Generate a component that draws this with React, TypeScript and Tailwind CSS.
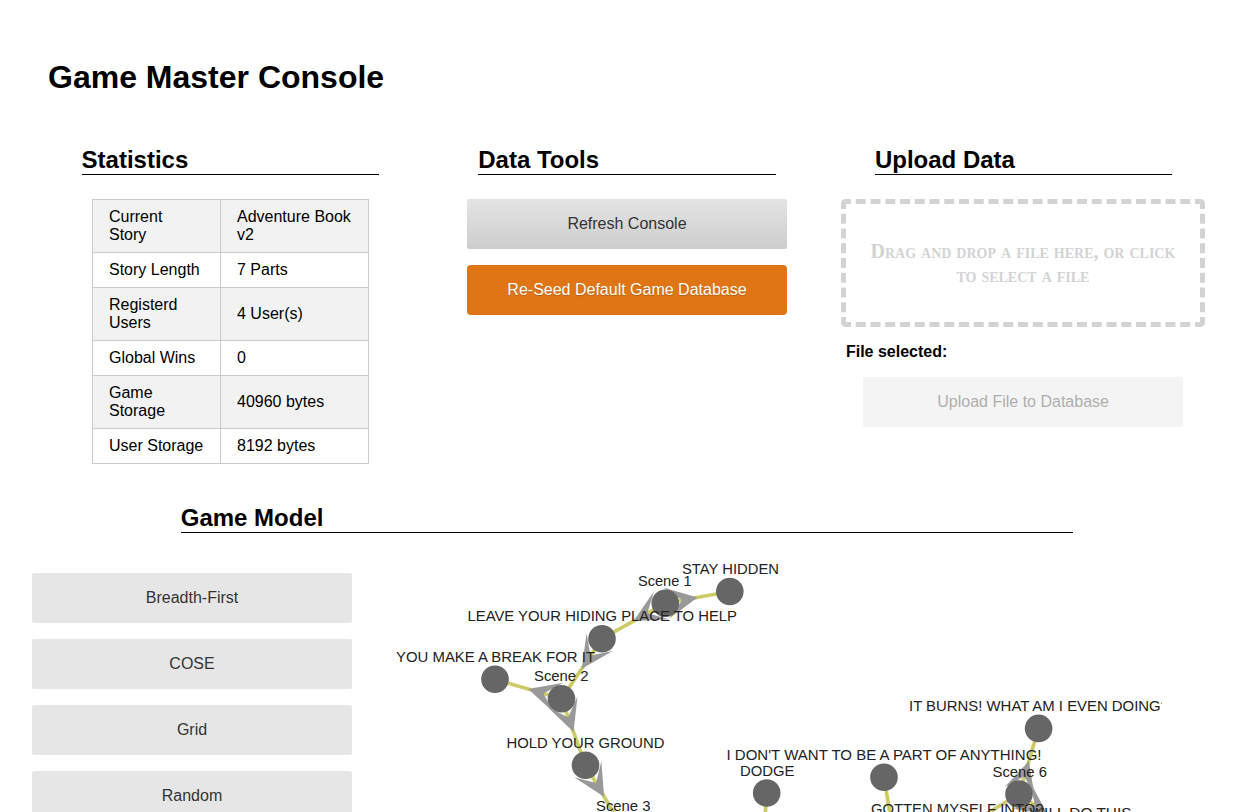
import React from "react";

type Point = [number, number];

const stats: [string, string][] = [
  ["Current Story", "Adventure Book v2"],
  ["Story Length", "7 Parts"],
  ["Registerd Users", "4 User(s)"],
  ["Global Wins", "0"],
  ["Game Storage", "40960 bytes"],
  ["User Storage", "8192 bytes"],
];

const layouts = ["Breadth-First", "COSE", "Grid", "Random"];

const points: Record<string, Point> = {
  stay: [729.8, 591.5],
  s1: [665.3, 603.3],
  leave: [602, 638.7],
  run: [495, 679.3],
  s2: [561.5, 698.7],
  hold: [585.5, 765.3],
  s3: [622.7, 828],
  dodge: [766.7, 793],
  s4: [762, 860],
  refuse: [884, 777.3],
  s5: [894, 838],
  burns: [1038.6, 728.4],
  s6: [1019, 794],
  gotten: [957, 832],
  will: [1076, 835],
};

const edges: [string, string, boolean][] = [
  ["s1", "stay", true],
  ["s1", "leave", true],
  ["leave", "s2", true],
  ["s2", "run", true],
  ["s2", "hold", true],
  ["hold", "s3", true],
  ["dodge", "s4", false],
  ["refuse", "s5", false],
  ["s6", "burns", true],
  ["s6", "will", true],
  ["gotten", "s6", false],
];

// text, left edge, baseline, width
const labels: [string, number, number, number][] = [
  ["STAY HIDDEN", 682, 574, 97],
  ["Scene 1", 638, 586, 53.5],
  ["LEAVE YOUR HIDING PLACE TO HELP", 467.5, 621, 269.5],
  ["YOU MAKE A BREAK FOR IT", 396, 662, 199],
  ["Scene 2", 534, 681, 54.5],
  ["HOLD YOUR GROUND", 506.5, 748, 158],
  ["Scene 3", 596, 811, 54.5],
  ["DODGE", 740, 776, 54.5],
  ["I DON'T WANT TO BE A PART OF ANYTHING!", 726.5, 760, 315],
  ["IT BURNS! WHAT AM I EVEN DOING?", 909, 711, 260],
  ["Scene 6", 992.5, 777, 54.5],
  ["GOTTEN MYSELF INTO?", 871, 813.5, 172.5],
  ["I WILL DO THIS", 1021, 818, 110.5],
];

function Arrow({ from, to }: { from: Point; to: Point }) {
  const dx = to[0] - from[0];
  const dy = to[1] - from[1];
  const len = Math.hypot(dx, dy);
  const x = (from[0] + to[0]) / 2;
  const y = (from[1] + to[1]) / 2;
  const ux = dx / len;
  const uy = dy / len;
  const at = (back: number, side: number) =>
    `${x - ux * back - uy * side},${y - uy * back + ux * side}`;
  return (
    <polygon points={[at(0, 0), at(32, 15.8), at(15.8, 0), at(32, -15.8)].join(" ")} fill="#999999" />
  );
}

function GameGraph() {
  return (
    <svg className="block h-[259px] w-[790px] shrink-0" viewBox="372 553 790 259">
      {edges.map(([a, b, arrow]) => (
        <g key={a + b}>
          <line
            x1={points[a][0]}
            y1={points[a][1]}
            x2={points[b][0]}
            y2={points[b][1]}
            stroke="#cccc66"
            strokeWidth="3.7"
          />
          {arrow && <Arrow from={points[a]} to={points[b]} />}
        </g>
      ))}
      {Object.entries(points).map(([id, [x, y]]) => (
        <circle key={id} cx={x} cy={y} r="13.8" fill="#666666" />
      ))}
      {labels.map(([text, x, y, width]) => (
        <text
          key={text}
          x={x}
          y={y}
          textLength={width}
          lengthAdjust="spacingAndGlyphs"
          fontSize="15.5"
          fill="#222222"
        >
          {text}
        </text>
      ))}
    </svg>
  );
}

function SectionTitle({ children }: { children: React.ReactNode }) {
  return (
    <h2 className="mx-[12.5%] border-b border-black text-2xl leading-7 font-bold">{children}</h2>
  );
}

export default function App() {
  return (
    <main className="h-[812px] overflow-hidden bg-white pl-8 font-['Liberation_Sans',Arial,sans-serif] text-base leading-[18px] text-black">
      <h1 className="pt-[59px] pl-4 text-[32px] leading-[37px] font-bold">Game Master Console</h1>

      <div className="mt-[50px] grid h-[358px] w-[1190px] grid-cols-3">
        <section>
          <SectionTitle>Statistics</SectionTitle>
          <table className="mt-6 ml-[60px] w-[277px] table-fixed border-collapse border border-[#cbcbcb]">
            <colgroup>
              <col className="w-[128px]" />
              <col />
            </colgroup>
            <tbody>
              {stats.map(([name, value]) => (
                <tr key={name} className="odd:bg-[#f2f2f2]">
                  <td className="border border-[#cbcbcb] px-4 py-2">{name}</td>
                  <td className="border border-[#cbcbcb] py-2 pr-3 pl-4">{value}</td>
                </tr>
              ))}
            </tbody>
          </table>
        </section>

        <section>
          <SectionTitle>Data Tools</SectionTitle>
          <div className="mt-6 flex flex-col items-center gap-4">
            <button className="h-[50px] w-80 rounded-xs bg-[#e6e6e6] bg-linear-to-b from-[#e4e4e4] to-[#cdcdcd] text-[#333333]">
              Refresh Console
            </button>
            <button className="h-[50px] w-80 rounded bg-[#df7514] text-white text-shadow-[0_1px_1px_rgba(0,0,0,0.2)]">
              Re-Seed Default Game Database
            </button>
          </div>
        </section>

        <section>
          <SectionTitle>Upload Data</SectionTitle>
          <div className="mt-6 ml-[15.6px] flex h-32 w-[364px] items-center justify-center rounded-[5px] border-5 border-dashed border-[#d3d3d3] text-center font-['Liberation_Serif',serif] text-[20px] leading-6 font-bold text-[#d3d3d3] [font-variant:small-caps]">
            <p>
              Drag and drop a file here, or click
              <br />
              to select a file
            </p>
          </div>
          <p className="mt-4 ml-[20.6px] font-bold">File selected:</p>
          <button
            disabled
            className="mt-4 ml-[37.8px] h-[50px] w-80 rounded-xs bg-[#e6e6e6] text-[#333333] opacity-40"
          >
            Upload File to Database
          </button>
        </section>
      </div>

      <section>
        <div className="w-[1190px]">
          <SectionTitle>Game Model</SectionTitle>
        </div>
        <div className="mt-5 flex gap-5">
          <div className="mt-5 flex w-80 shrink-0 flex-col gap-4">
            {layouts.map((name) => (
              <button key={name} className="h-[50px] shrink-0 rounded-xs bg-[#e6e6e6] text-[#333333]">
                {name}
              </button>
            ))}
          </div>
          <GameGraph />
        </div>
      </section>
    </main>
  );
}
